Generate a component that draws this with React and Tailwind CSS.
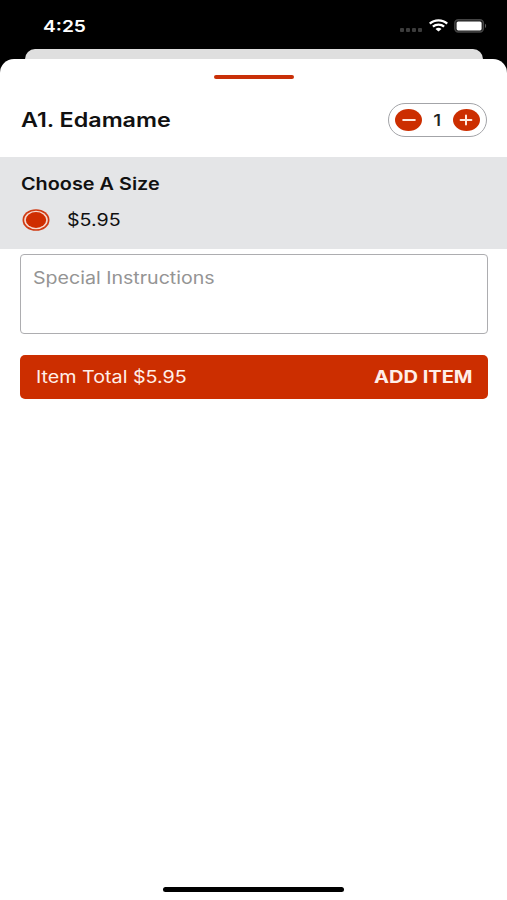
function WifiIcon() {
  return (
    <svg width="19" height="13" viewBox="0 0 19 13" fill="none" stroke="white" strokeWidth="2.3">
      <path d="M0.8 4.6C5.4 0.3 13.6 0.3 18.2 4.6" />
      <path d="M3.9 7.7C6.9 5 12.1 5 15.1 7.7" />
      <path d="M6.5 9.9C8.2 8.4 10.8 8.4 12.5 9.9L9.5 12.5Z" fill="white" stroke="none" />
    </svg>
  );
}

function BatteryIcon() {
  return (
    <svg width="33" height="14" viewBox="0 0 33 14">
      <rect x="0.8" y="0.8" width="28.6" height="12.2" rx="3.5" fill="#1c1c1c" stroke="#444" strokeWidth="1.4" />
      <rect x="2.6" y="2.4" width="25" height="9" rx="1.6" fill="white" />
      <path d="M31 4.8C32.5 5.4 32.5 8.4 31 9Z" fill="#5c5c5c" />
    </svg>
  );
}

function StatusBar() {
  return (
    <div className="flex h-[49px] items-start justify-between pl-[42.5px] pr-[20px] text-white">
      <span className="mt-[16px] origin-left scale-x-[1.2] text-[16px] leading-5 font-semibold">4:25</span>
      <div className="mt-[19px] flex items-start">
        <div className="mt-[9px] mr-[7px] flex gap-[2px]">
          <span className="h-[3.5px] w-[4px] rounded-[1px] bg-[#3c3c3c]" />
          <span className="h-[3.5px] w-[4px] rounded-[1px] bg-[#3c3c3c]" />
          <span className="h-[3.5px] w-[4px] rounded-[1px] bg-[#3c3c3c]" />
          <span className="h-[3.5px] w-[4px] rounded-[1px] bg-[#3c3c3c]" />
        </div>
        <WifiIcon />
        <div className="ml-[6px]">
          <BatteryIcon />
        </div>
      </div>
    </div>
  );
}

function QuantityPicker() {
  return (
    <div className="flex h-[34px] w-[99px] items-center justify-between rounded-full border border-[#a3a4a8] px-[6px]">
      <button aria-label="Decrease" className="flex h-[22px] w-[27px] items-center justify-center rounded-[50%] bg-[#cc2e00]">
        <svg width="14" height="12" viewBox="0 0 14 12" stroke="#ffe9df" strokeWidth="2" strokeLinecap="round">
          <path d="M1.2 6H12.8" />
        </svg>
      </button>
      <span className="scale-x-[1.2] text-[16px] leading-5 font-medium text-[#222]">1</span>
      <button aria-label="Increase" className="flex h-[22px] w-[27px] items-center justify-center rounded-[50%] bg-[#cc2e00]">
        <svg width="14" height="12" viewBox="0 0 14 12" stroke="#ffe9df" strokeWidth="2" strokeLinecap="round">
          <path d="M1.6 6H12.4M7 1.4V10.6" />
        </svg>
      </button>
    </div>
  );
}

export default function App() {
  return (
    <div className="flex h-[900px] w-[507px] flex-col overflow-hidden bg-black font-['Inter','Liberation_Sans',sans-serif] text-[#111]">
      <StatusBar />
      <div className="mr-[24px] ml-[25px] h-[10px] shrink-0 rounded-t-[11px] bg-[#dfdfdf]" />

      <div className="flex flex-1 flex-col rounded-t-[14px] bg-white">
        <div className="mx-auto mt-[16px] h-[4px] w-[80px] rounded-full bg-[#c93008]" />

        <div className="mt-[24px] flex h-[34px] items-center justify-between pr-[20px] pl-[21px]">
          <h1 className="origin-left scale-x-[1.195] text-[19.5px] leading-6 font-semibold">A1. Edamame</h1>
          <QuantityPicker />
        </div>

        <section className="mt-[20px] flex h-[92px] flex-col items-start bg-[#e4e5e7] pl-[21px]">
          <h2 className="mt-[17px] origin-left scale-x-[1.167] text-[17px] leading-5 font-semibold">Choose A Size</h2>
          <div className="mt-[14.5px] ml-[1px] flex items-center">
            <svg width="28" height="22" viewBox="0 0 28 22">
              <ellipse cx="14" cy="11" rx="13.5" ry="10.8" fill="#d03a12" />
              <ellipse cx="14" cy="11" rx="11.8" ry="9.2" fill="#f6d8cd" />
              <ellipse cx="14" cy="11" rx="10.2" ry="7.9" fill="#cf2d00" />
            </svg>
            <span className="ml-[17px] origin-left scale-x-[1.155] text-[17px] leading-5">$5.95</span>
          </div>
        </section>

        <div className="mr-[19px] ml-[20px] mt-[5px] flex h-[80px] items-start rounded-[4px] border-[1.5px] border-[#adadb0] pt-[13px] pl-[12px]">
          <span className="origin-left scale-x-[1.152] text-[17px] leading-5 text-[#949494]">Special Instructions</span>
        </div>

        <button className="mr-[19px] ml-[20px] mt-[21px] flex h-[44px] items-center justify-between rounded-[5px] bg-[#cc2e00] pr-[15.5px] pl-[15.5px] text-[#ffeee8]">
          <span className="origin-left scale-x-[1.158] text-[17px] leading-5">Item Total $5.95</span>
          <span className="origin-right scale-x-[1.18] text-[17px] leading-5 font-bold">ADD ITEM</span>
        </button>

        <div className="mx-auto mt-auto mb-[8px] h-[5px] w-[181px] rounded-full bg-black" />
      </div>
    </div>
  );
}
